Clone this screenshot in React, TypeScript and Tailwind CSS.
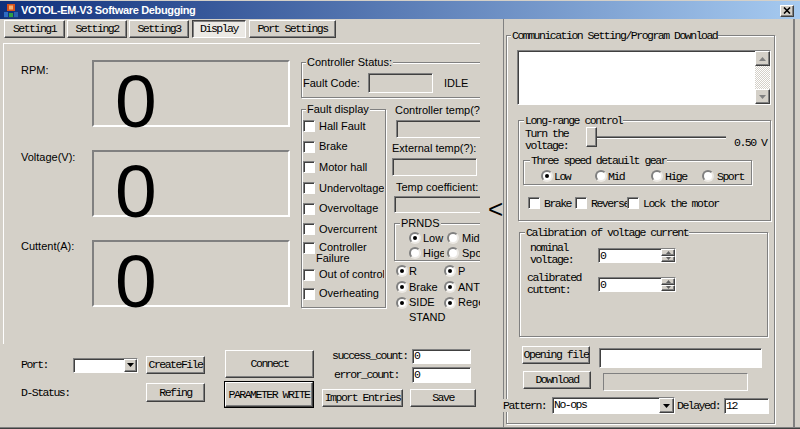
import React from "react";

const M = "font-['Liberation_Mono',monospace] text-[11.5px] tracking-[-1.5px]";
const S = "font-['Liberation_Sans',Arial,sans-serif] text-[11px]";

const RAISED =
  "bg-[#d4d0c8] border border-t-white border-l-white border-r-[#404040] border-b-[#404040] shadow-[inset_-1px_-1px_0_0_#808080]";
const PRESSED =
  "bg-[#ebe9e4] border border-t-[#404040] border-l-[#404040] border-r-white border-b-white shadow-[inset_1px_1px_0_0_#808080]";
const SUNKEN_W =
  "bg-white border border-t-[#808080] border-l-[#808080] border-r-white border-b-white shadow-[inset_1px_1px_0_0_#404040]";
const SUNKEN_G =
  "bg-[#d4d0c8] border border-t-[#808080] border-l-[#808080] border-r-white border-b-white shadow-[inset_1px_1px_0_0_#404040]";
const ETCH = "border border-[#808080] shadow-[inset_1px_1px_0_0_#ffffff,1px_1px_0_0_#ffffff]";

type P = { className?: string; children?: React.ReactNode };

function Btn({ className = "", children }: P) {
  return (
    <div
      className={`${RAISED} ${M} flex items-center justify-center leading-[12px] whitespace-nowrap overflow-hidden shrink-0 ${className}`}
    >
      {children}
    </div>
  );
}

function Group({
  label,
  className = "",
  labelClass = "",
  children,
}: P & { label: string; labelClass?: string }) {
  return (
    <div className={`relative shrink-0 ${ETCH} ${className}`}>
      <span
        className={`absolute top-[-7px] px-[1px] bg-[#d4d0c8] leading-[13px] whitespace-nowrap ${labelClass}`}
      >
        {label}
      </span>
      {children}
    </div>
  );
}

function Check() {
  return <span className={`block w-[12px] h-[12px] shrink-0 ${SUNKEN_W}`} />;
}

function Radio({ on = false }: { on?: boolean }) {
  return (
    <span className="flex w-[12px] h-[12px] shrink-0 rounded-full bg-white border-2 border-t-[#808080] border-l-[#808080] border-r-[#ece9e4] border-b-[#ece9e4] items-center justify-center">
      {on && <span className="block w-[4px] h-[4px] rounded-full bg-black" />}
    </span>
  );
}

function DownTri({ c = "#000" }: { c?: string }) {
  return (
    <svg width="7" height="4" viewBox="0 0 7 4">
      <path d="M0 0H7L3.5 4Z" fill={c} />
    </svg>
  );
}
function UpTri({ c = "#000" }: { c?: string }) {
  return (
    <svg width="7" height="4" viewBox="0 0 7 4">
      <path d="M0 4H7L3.5 0Z" fill={c} />
    </svg>
  );
}

function AppIcon() {
  return (
    <svg width="14" height="14" viewBox="0 0 14 14" className="shrink-0">
      <rect x="3" y="0" width="8" height="7" fill="#d8501c" />
      <rect x="5" y="1.5" width="4" height="4" fill="#f4b070" />
      <rect x="0" y="8" width="4" height="6" fill="#2f6cc4" />
      <rect x="5" y="9" width="4" height="5" fill="#2e9e44" />
      <rect x="10" y="8" width="4" height="6" fill="#2a5fb0" />
      <rect x="0" y="13" width="14" height="1" fill="#1d3f7a" />
    </svg>
  );
}

function TitleBar() {
  return (
    <div className="h-[19px] shrink-0 border-t border-[#d4d0c8] flex items-center pl-[4px] pr-[6px] pt-[1px] bg-[linear-gradient(to_right,#10307c,#a6caf0)]">
      <AppIcon />
      <span className="ml-[3px] text-white font-bold text-[11px] tracking-[-0.35px] font-['Liberation_Sans',Arial,sans-serif] leading-[13px]">
        VOTOL-EM-V3 Software Debugging
      </span>
      <div className={`ml-auto w-[14px] h-[12px] ${RAISED} flex items-center justify-center`}>
        <svg width="8" height="7" viewBox="0 0 8 7">
          <path d="M1 0.5L7 6.5M7 0.5L1 6.5" stroke="#000" strokeWidth="1.6" />
        </svg>
      </div>
    </div>
  );
}

function Tabs() {
  return (
    <div className="flex mt-[1px] h-[18px] pl-[4px] shrink-0">
      <Btn className="w-[61px] h-[18px]">Setting1</Btn>
      <Btn className="ml-[2px] w-[60px] h-[18px]">Setting2</Btn>
      <Btn className="ml-[2px] w-[60px] h-[18px]">Setting3</Btn>
      <div
        className={`ml-[3px] w-[54px] h-[18px] shrink-0 ${PRESSED} ${M} flex items-center justify-center leading-[12px]`}
      >
        Display
      </div>
      <Btn className="ml-[3px] w-[87px] h-[18px]">Port Settings</Btn>
    </div>
  );
}

function DisplayRow({ label, lmt }: { label: string; lmt: string }) {
  return (
    <div className="flex h-[67px] shrink-0">
      <span className={`w-[71px] leading-[13px] ${lmt}`}>{label}</span>
      <div className="w-[198px] h-[67px] border-2 border-t-[#808080] border-l-[#808080] border-r-white border-b-white">
        <div className="font-['Liberation_Sans',Arial,sans-serif] text-[75px] leading-[75px] pl-[21px] mt-[2px]">
          0
        </div>
      </div>
    </div>
  );
}

function CheckRow({ text, h }: { text: string; h: string }) {
  return (
    <div className={`flex items-center ${h}`}>
      <span className="ml-[1px]">
        <Check />
      </span>
      <span className="ml-[4px] w-[65px] overflow-hidden whitespace-nowrap leading-[13px]">{text}</span>
    </div>
  );
}

function FaultGroup() {
  const f = ["Hall Fault", "Brake", "Motor hall", "Undervoltage", "Overvoltage", "Overcurrent"];
  return (
    <Group label="Fault display" className="mt-[11px] w-[85px] h-[199px]" labelClass="left-[4px]">
      <div className="flex flex-col pt-[6px]">
        {f.map((t) => (
          <CheckRow key={t} text={t} h="h-[20.6px]" />
        ))}
        <div className="flex items-start h-[25px] pt-[2px]">
          <span className="ml-[1px]">
            <Check />
          </span>
          <span className="ml-[4px] leading-[11.5px] whitespace-nowrap">
            Controller
            <br />
            <span className="inline-block -ml-[3px]">Failure</span>
          </span>
        </div>
        <CheckRow text="Out of control" h="h-[20px]" />
        <CheckRow text="Overheating" h="h-[18px]" />
      </div>
    </Group>
  );
}

function SubColumn() {
  return (
    <div className="ml-[5px] w-[120px] shrink-0 flex flex-col">
      <span className="mt-[6px] ml-[4px] leading-[13px] whitespace-nowrap">Controller temp(?):</span>
      <div className={`mt-[3px] ml-[5px] w-[100px] h-[18px] shrink-0 ${SUNKEN_G}`} />
      <span className="mt-[4px] ml-[1px] leading-[13px] whitespace-nowrap">External temp(?):</span>
      <div className={`mt-[3px] ml-[1px] w-[85px] h-[18px] shrink-0 ${SUNKEN_G}`} />
      <span className="mt-[5px] ml-[5px] leading-[13px] whitespace-nowrap">Temp coefficient:</span>
      <div className={`mt-[2px] ml-[3px] w-[100px] h-[17px] shrink-0 ${SUNKEN_G}`} />
      <Group label="PRNDS" className="mt-[10px] ml-[3px] w-[100px] h-[38px]" labelClass="left-[5px]">
        <div className="flex flex-col gap-[1px] pt-[7px] pl-[14px]">
          <div className="flex items-center h-[14px]">
            <div className="w-[38px] flex items-center shrink-0">
              <Radio on />
              <span className="ml-[2px] w-[21px] overflow-hidden whitespace-nowrap leading-[13px]">Low</span>
            </div>
            <div className="flex items-center">
              <Radio />
              <span className="ml-[3px] whitespace-nowrap leading-[13px]">Mid</span>
            </div>
          </div>
          <div className="flex items-center h-[14px]">
            <div className="w-[38px] flex items-center shrink-0">
              <Radio />
              <span className="ml-[2px] w-[21px] overflow-hidden whitespace-nowrap leading-[13px]">Hige</span>
            </div>
            <div className="flex items-center">
              <Radio />
              <span className="ml-[3px] whitespace-nowrap leading-[13px]">Sport</span>
            </div>
          </div>
        </div>
      </Group>
      <div className="mt-[2px] ml-[5px] flex flex-col">
        <div className="flex items-center h-[16px]">
          <div className="w-[48px] flex items-center shrink-0">
            <Radio on />
            <span className="ml-[1px] leading-[13px]">R</span>
          </div>
          <div className="flex items-center">
            <Radio on />
            <span className="ml-[2px] leading-[13px]">P</span>
          </div>
        </div>
        <div className="flex items-center h-[16px]">
          <div className="w-[48px] flex items-center shrink-0">
            <Radio on />
            <span className="ml-[1px] leading-[13px] whitespace-nowrap">Brake</span>
          </div>
          <div className="flex items-center">
            <Radio on />
            <span className="ml-[2px] leading-[13px]">ANT</span>
          </div>
        </div>
        <div className="flex items-start">
          <div className="w-[48px] flex items-start shrink-0">
            <span className="mt-[2px]">
              <Radio on />
            </span>
            <span className="ml-[1px] w-[35px] leading-[15px]">SIDE STAND</span>
          </div>
          <div className="flex items-start">
            <span className="mt-[2px]">
              <Radio on />
            </span>
            <span className="ml-[2px] leading-[15px] whitespace-nowrap">Regen</span>
          </div>
        </div>
      </div>
    </div>
  );
}

function TabPage() {
  return (
    <div className="mt-[5px] ml-[3px] w-[477px] h-[301px] shrink-0 border-t border-l border-white overflow-hidden flex">
      <div className="ml-[17px] w-[269px] shrink-0 flex flex-col pt-[16px] gap-[23px]">
        <DisplayRow label="RPM:" lmt="mt-[4px]" />
        <DisplayRow label="Voltage(V):" lmt="mt-[1px]" />
        <DisplayRow label="Cuttent(A):" lmt="mt-0" />
      </div>
      <div className="ml-[11px] w-[200px] shrink-0 flex flex-col">
        <Group label="Controller Status:" className="mt-[18px] w-[200px] h-[36px]" labelClass="left-[4px]">
          <div className="flex items-center mt-[10px] h-[20px]">
            <span className="ml-[1px] w-[65px] leading-[13px] whitespace-nowrap">Fault Code:</span>
            <div className={`w-[65px] h-[20px] shrink-0 ${SUNKEN_G}`} />
            <span className="ml-[11px] leading-[13px]">IDLE</span>
          </div>
        </Group>
        <div className="flex">
          <FaultGroup />
          <SubColumn />
        </div>
      </div>
    </div>
  );
}

function BottomControls() {
  return (
    <div className={`flex h-[83px] shrink-0 ${M}`}>
      <div className="ml-[21px] flex flex-col pt-[12px] shrink-0">
        <div className="flex items-center h-[18px]">
          <span className="w-[52px] leading-[12px]">Port:</span>
          <div className={`w-[65px] h-[15px] shrink-0 ${SUNKEN_W} flex justify-end`}>
            <div className={`w-[13px] ${RAISED} flex items-center justify-center`}>
              <DownTri />
            </div>
          </div>
          <Btn className="ml-[8px] w-[59px] h-[18px]">CreateFile</Btn>
        </div>
        <div className="flex items-center h-[19px] mt-[9px]">
          <span className="w-[125px] leading-[12px]">D-Status:</span>
          <Btn className="w-[59px] h-[19px]">Refing</Btn>
        </div>
      </div>
      <div className="ml-[19px] pt-[6px] flex flex-col shrink-0">
        <Btn className="ml-[1px] w-[89px] h-[28px]">Connect</Btn>
        <div className="mt-[3px] border border-black">
          <Btn className="w-[88px] h-[25px]">PARAMETER WRITE</Btn>
        </div>
      </div>
      <div className="ml-[8px] pt-[4px] flex flex-col w-[154px] shrink-0">
        <div className="flex items-center h-[16px]">
          <span className="pl-[10px] w-[90px] leading-[12px] whitespace-nowrap">success_count:</span>
          <div className={`w-[59px] h-[15px] ${SUNKEN_W} flex items-center pl-[1px] leading-[12px]`}>0</div>
        </div>
        <div className="mt-[3px] flex items-center h-[16px]">
          <span className="pl-[12px] w-[90px] leading-[12px] whitespace-nowrap">error_count:</span>
          <div className={`w-[59px] h-[16px] ${SUNKEN_W} flex items-center pl-[1px] leading-[12px]`}>0</div>
        </div>
        <div className="mt-[6px] flex">
          <Btn className="w-[81px] h-[18px]">Import Entries</Btn>
          <Btn className="ml-[7px] w-[66px] h-[18px]">Save</Btn>
        </div>
      </div>
    </div>
  );
}

function LeftArea() {
  return (
    <div className="w-[503px] shrink-0 flex">
      <div className="w-[480px] shrink-0 flex flex-col">
        <Tabs />
        <TabPage />
        <BottomControls />
      </div>
      <div className="w-[23px] shrink-0 pl-[8px]">
        <div className="mt-[177px] font-['Liberation_Sans',Arial,sans-serif] text-[26px] leading-[26px]">&lt;</div>
      </div>
    </div>
  );
}

function SpinInput({ className = "" }: { className?: string }) {
  return (
    <div className={`w-[78px] h-[15px] shrink-0 ${SUNKEN_W} flex ${className}`}>
      <span className="flex-1 pl-[1px] leading-[13px]">0</span>
      <div className="w-[14px] flex flex-col">
        <div className={`flex-1 ${RAISED} flex items-center justify-center`}>
          <svg width="5" height="3" viewBox="0 0 5 3">
            <path d="M0 3H5L2.5 0Z" fill="#606060" />
          </svg>
        </div>
        <div className={`flex-1 ${RAISED} flex items-center justify-center`}>
          <svg width="5" height="3" viewBox="0 0 5 3">
            <path d="M0 0H5L2.5 3Z" fill="#606060" />
          </svg>
        </div>
      </div>
    </div>
  );
}

function RightArea() {
  return (
    <div className="flex w-[297px] shrink-0">
      <div className={`w-[292px] shrink-0 border-l border-r-2 border-[#808080] ${M}`}>
        <Group
          label="Communication Setting/Program Download"
          className="ml-[2px] mt-[16px] w-[269px] h-[389px]"
          labelClass="left-[4px]"
        >
          <div className="flex flex-col">
            <div className={`ml-[10px] mt-[14px] w-[254px] h-[55px] shrink-0 ${SUNKEN_W} flex justify-end`}>
              <div className="w-[15px] flex flex-col">
                <div className={`h-[15px] ${RAISED} flex items-center justify-center`}>
                  <UpTri c="#808080" />
                </div>
                <div className="flex-1 [background-image:repeating-conic-gradient(#ffffff_0%_25%,#d4d0c8_0%_50%)] [background-size:2px_2px]" />
                <div className={`h-[15px] ${RAISED} flex items-center justify-center`}>
                  <DownTri c="#808080" />
                </div>
              </div>
            </div>

            <Group label="Long-range control" className="ml-[11px] mt-[15px] w-[253px] h-[101px]" labelClass="left-[5px]">
              <div className="flex mt-[6px]">
                <span className="ml-[6px] w-[61px] mt-[1px] leading-[12px] shrink-0">
                  Turn the
                  <br />
                  voltage:
                </span>
                <div className="w-[140px] h-[20px] flex items-center shrink-0">
                  <div className={`w-[11px] h-[20px] shrink-0 ${RAISED}`} />
                  <div className="flex-1 h-[3px] border-t border-t-[#808080] border-b border-b-white bg-[#404040]" />
                </div>
                <span className="ml-[8px] mt-[9px] leading-[13px] whitespace-nowrap">0.50 V</span>
              </div>
              <Group
                label="Three speed detauilt gear"
                className="mt-[8px] ml-[4px] w-[229px] h-[25px]"
                labelClass="left-[6px]"
              >
                <div className="flex items-center h-[14px] mt-[8px] ml-[17px]">
                  <div className="w-[54px] flex items-center shrink-0">
                    <Radio on />
                    <span className="ml-[1px] leading-[13px]">Low</span>
                  </div>
                  <div className="w-[56px] flex items-center shrink-0">
                    <Radio />
                    <span className="ml-[1px] leading-[13px]">Mid</span>
                  </div>
                  <div className="w-[51px] flex items-center shrink-0">
                    <Radio />
                    <span className="ml-[2px] leading-[13px]">Hige</span>
                  </div>
                  <div className="flex items-center">
                    <Radio />
                    <span className="ml-[3px] leading-[13px]">Sport</span>
                  </div>
                </div>
              </Group>
              <div className="flex items-center h-[14px] mt-[11px] ml-[9px]">
                <Check />
                <span className="ml-[4px] w-[31px] leading-[13px] shrink-0">Brake</span>
                <Check />
                <span className="ml-[4px] w-[36px] overflow-hidden whitespace-nowrap leading-[13px] shrink-0">Reverse</span>
                <Check />
                <span className="ml-[4px] whitespace-nowrap leading-[13px]">Lock the motor</span>
              </div>
            </Group>

            <Group
              label="Calibration of voltage current"
              className="ml-[12px] mt-[11px] w-[249px] h-[105px]"
              labelClass="left-[5px]"
            >
              <div className="flex mt-[9px]">
                <span className="ml-[10px] w-[68px] leading-[11.5px] shrink-0">
                  nominal
                  <br />
                  voltage:
                </span>
                <SpinInput className="mt-[6px]" />
              </div>
              <div className="flex mt-[7px]">
                <span className="ml-[7px] w-[71px] leading-[11.5px] shrink-0">
                  calibrated
                  <br />
                  cuttent:
                </span>
                <SpinInput className="mt-[5px]" />
              </div>
            </Group>

            <div className="flex mt-[9px] ml-[15px]">
              <Btn className="w-[68px] h-[18px]">Opening file</Btn>
              <div className={`ml-[9px] mt-[2px] w-[163px] h-[20px] shrink-0 ${SUNKEN_W}`} />
            </div>
            <div className="flex mt-[3px] ml-[16px]">
              <Btn className="w-[68px] h-[18px]">Download</Btn>
              <div className="ml-[12px] mt-[2px] w-[145px] h-[18px] shrink-0 border border-t-[#808080] border-l-[#808080] border-r-white border-b-white" />
            </div>
            <div className="flex items-center mt-[6px] -ml-[4px] h-[17px]">
              <span className="w-[49px] shrink-0 bg-[#d4d0c8] leading-[13px]">Pattern:</span>
              <div className={`w-[123px] h-[17px] shrink-0 ${SUNKEN_W} flex`}>
                <span className="flex-1 pl-[1px] leading-[14px]">No-ops</span>
                <div className={`w-[15px] ${RAISED} flex items-center justify-center`}>
                  <DownTri />
                </div>
              </div>
              <span className="ml-[2px] w-[47px] shrink-0 leading-[13px]">Delayed:</span>
              <div className={`w-[45px] h-[16px] shrink-0 ${SUNKEN_W} pl-[1px] leading-[13px]`}>12</div>
            </div>
          </div>
        </Group>
      </div>
    </div>
  );
}

export default function App() {
  return (
    <div className={`w-[800px] h-[429px] overflow-hidden bg-[#d4d0c8] flex flex-col text-black ${S}`}>
      <TitleBar />
      <div className="flex h-[408px] shrink-0">
        <LeftArea />
        <RightArea />
      </div>
      <div className="h-[2px] shrink-0 border-t border-[#808080] bg-[#404040]" />
    </div>
  );
}
